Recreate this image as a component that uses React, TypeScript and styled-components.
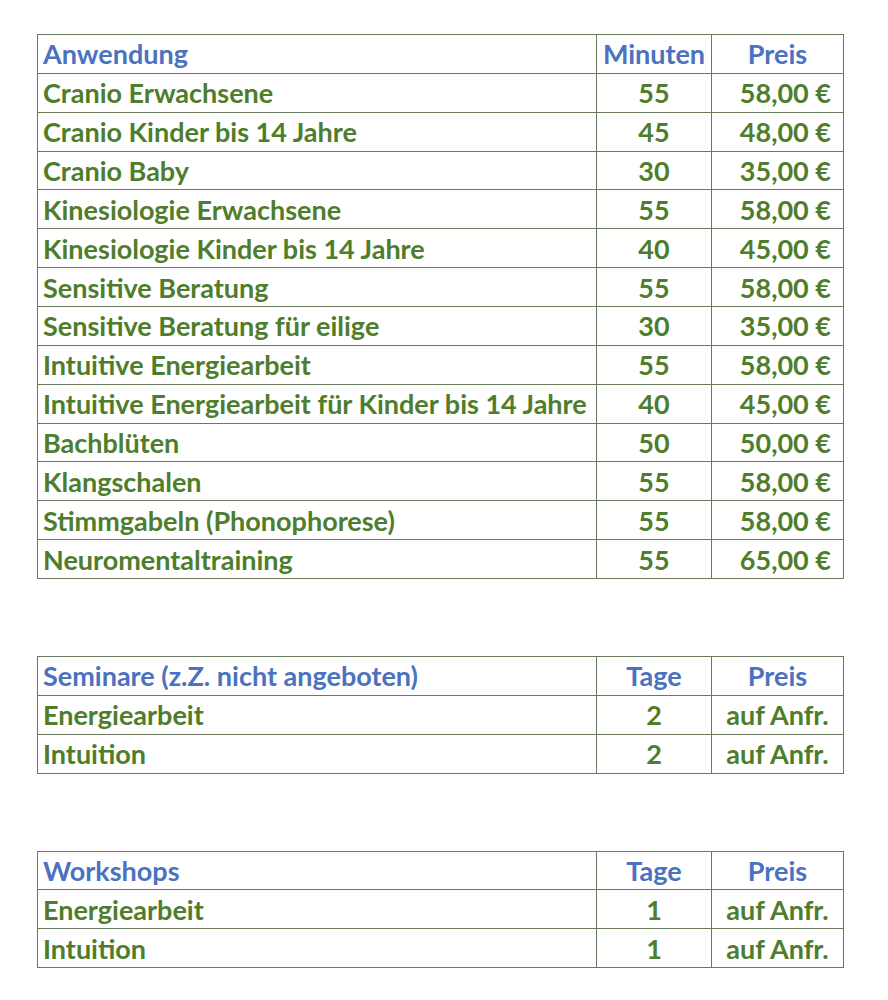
import React from 'react'
import styled, { createGlobalStyle } from 'styled-components'

const GlobalStyle = createGlobalStyle`
	html, body {
		margin: 0;
		padding: 0;
		background: #ffffff;
	}
`

const Page = styled.div`
	display: flex;
	flex-direction: column;
	gap: 77px;
	padding: 34px 0 0 37px;
	font-family: Lato, 'Open Sans', sans-serif;
	font-weight: 700;
`

const PriceTable = styled.table`
	width: 806px;
	border-collapse: collapse;
	table-layout: fixed;
	font-size: 27px;
`

const Cell = styled.td<{ $align?: 'left' | 'center' | 'right'; $head?: boolean }>`
	height: 37.86px;
	padding: 0 12px 0 5px;
	border: 1px solid #6b7a5e;
	white-space: nowrap;
	text-align: ${p => p.$align || 'left'};
	color: ${p => (p.$head ? '#4a72c0' : '#4e7d2c')};
	line-height: 1;
	${p => p.$align === 'center' && 'padding: 0 2px;'}
`

interface Row {
	name: string
	amount: string
	price: string
}

interface Props {
	title: string
	unit: string
	rows: Row[]
	priceAlign: 'center' | 'right'
}

const Table: React.FC<Props> = ({ title, unit, rows, priceAlign }) => (
	<PriceTable>
		<colgroup>
			<col style={{ width: 559 }} />
			<col style={{ width: 115 }} />
			<col style={{ width: 132 }} />
		</colgroup>
		<tbody>
			<tr>
				<Cell $head>{title}</Cell>
				<Cell $head $align="center">{unit}</Cell>
				<Cell $head $align="center">Preis</Cell>
			</tr>
			{rows.map(r => (
				<tr key={r.name}>
					<Cell>{r.name}</Cell>
					<Cell $align="center">{r.amount}</Cell>
					<Cell $align={priceAlign}>{r.price}</Cell>
				</tr>
			))}
		</tbody>
	</PriceTable>
)

const treatments: Row[] = [
	{ name: 'Cranio Erwachsene', amount: '55', price: '58,00 €' },
	{ name: 'Cranio Kinder bis 14 Jahre', amount: '45', price: '48,00 €' },
	{ name: 'Cranio Baby', amount: '30', price: '35,00 €' },
	{ name: 'Kinesiologie Erwachsene', amount: '55', price: '58,00 €' },
	{ name: 'Kinesiologie Kinder bis 14 Jahre', amount: '40', price: '45,00 €' },
	{ name: 'Sensitive Beratung', amount: '55', price: '58,00 €' },
	{ name: 'Sensitive Beratung für eilige', amount: '30', price: '35,00 €' },
	{ name: 'Intuitive Energiearbeit', amount: '55', price: '58,00 €' },
	{ name: 'Intuitive Energiearbeit für Kinder bis 14 Jahre', amount: '40', price: '45,00 €' },
	{ name: 'Bachblüten', amount: '50', price: '50,00 €' },
	{ name: 'Klangschalen', amount: '55', price: '58,00 €' },
	{ name: 'Stimmgabeln (Phonophorese)', amount: '55', price: '58,00 €' },
	{ name: 'Neuromentaltraining', amount: '55', price: '65,00 €' },
]

const seminars: Row[] = [
	{ name: 'Energiearbeit', amount: '2', price: 'auf Anfr.' },
	{ name: 'Intuition', amount: '2', price: 'auf Anfr.' },
]

const workshops: Row[] = [
	{ name: 'Energiearbeit', amount: '1', price: 'auf Anfr.' },
	{ name: 'Intuition', amount: '1', price: 'auf Anfr.' },
]

const App: React.FC = () => (
	<>
		<GlobalStyle />
		<Page>
			<Table title="Anwendung" unit="Minuten" rows={treatments} priceAlign="right" />
			<Table title="Seminare (z.Z. nicht angeboten)" unit="Tage" rows={seminars} priceAlign="center" />
			<Table title="Workshops" unit="Tage" rows={workshops} priceAlign="center" />
		</Page>
	</>
)

export default App
